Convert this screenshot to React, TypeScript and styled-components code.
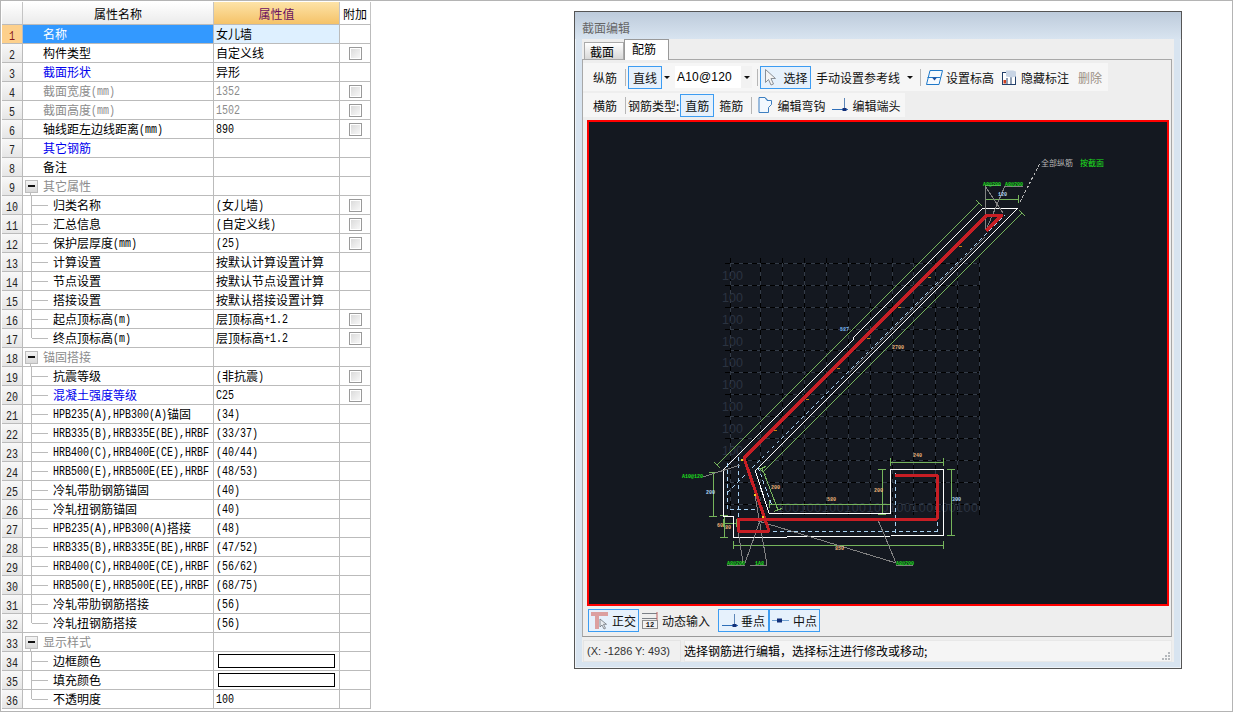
import styled, { createGlobalStyle } from "styled-components";

const GlobalStyle = createGlobalStyle`
  html, body { margin: 0; padding: 0; background: #fff; }
  body { font-family: "Noto Sans CJK SC", "Liberation Sans", sans-serif; font-size: 12px; color: #000; }
`;

type Row = {
  name: string;
  value?: string;
  kind?: "top" | "group" | "child";
  tone?: "link" | "muted";
  check?: boolean;
  last?: boolean;
  swatch?: boolean;
};

const rows: Row[] = [
  { name: "名称", value: "女儿墙" },
  { name: "构件类型", value: "自定义线", check: true },
  { name: "截面形状", value: "异形", tone: "link" },
  { name: "截面宽度(mm)", value: "1352", tone: "muted", check: true },
  { name: "截面高度(mm)", value: "1502", tone: "muted", check: true },
  { name: "轴线距左边线距离(mm)", value: "890", check: true },
  { name: "其它钢筋", tone: "link" },
  { name: "备注" },
  { name: "其它属性", kind: "group" },
  { name: "归类名称", value: "(女儿墙)", kind: "child", check: true },
  { name: "汇总信息", value: "(自定义线)", kind: "child", check: true },
  { name: "保护层厚度(mm)", value: "(25)", kind: "child", check: true },
  { name: "计算设置", value: "按默认计算设置计算", kind: "child" },
  { name: "节点设置", value: "按默认节点设置计算", kind: "child" },
  { name: "搭接设置", value: "按默认搭接设置计算", kind: "child" },
  { name: "起点顶标高(m)", value: "层顶标高+1.2", kind: "child", check: true },
  { name: "终点顶标高(m)", value: "层顶标高+1.2", kind: "child", check: true, last: true },
  { name: "锚固搭接", kind: "group" },
  { name: "抗震等级", value: "(非抗震)", kind: "child", check: true },
  { name: "混凝土强度等级", value: "C25", kind: "child", tone: "link", check: true },
  { name: "HPB235(A),HPB300(A)锚固", value: "(34)", kind: "child" },
  { name: "HRB335(B),HRB335E(BE),HRBF", value: "(33/37)", kind: "child" },
  { name: "HRB400(C),HRB400E(CE),HRBF", value: "(40/44)", kind: "child" },
  { name: "HRB500(E),HRB500E(EE),HRBF", value: "(48/53)", kind: "child" },
  { name: "冷轧带肋钢筋锚固", value: "(40)", kind: "child" },
  { name: "冷轧扭钢筋锚固", value: "(40)", kind: "child" },
  { name: "HPB235(A),HPB300(A)搭接", value: "(48)", kind: "child" },
  { name: "HRB335(B),HRB335E(BE),HRBF", value: "(47/52)", kind: "child" },
  { name: "HRB400(C),HRB400E(CE),HRBF", value: "(56/62)", kind: "child" },
  { name: "HRB500(E),HRB500E(EE),HRBF", value: "(68/75)", kind: "child" },
  { name: "冷轧带肋钢筋搭接", value: "(56)", kind: "child" },
  { name: "冷轧扭钢筋搭接", value: "(56)", kind: "child", last: true },
  { name: "显示样式", kind: "group" },
  { name: "边框颜色", kind: "child", swatch: true },
  { name: "填充颜色", kind: "child", swatch: true },
  { name: "不透明度", value: "100", kind: "child", last: true },
];

// latin runs use a 6px-wide mono, as the bitmap font in the program does
function Mixed({ text }: { text: string }) {
  const parts = text.split(/([\x20-\x7e]+)/).filter(Boolean);
  return (
    <>
      {parts.map((p, i) => (/^[\x20-\x7e]/.test(p) ? <Latin key={i}>{p}</Latin> : <span key={i}>{p}</span>))}
    </>
  );
}

function PropertyTable() {
  return (
    <Table>
      <HeadRow>
        <HeadCorner />
        <HeadName>属性名称</HeadName>
        <HeadValue>属性值</HeadValue>
        <HeadExtra>附加</HeadExtra>
      </HeadRow>
      {rows.map((r, i) => {
        const active = i === 0;
        const tone = r.kind === "group" ? "muted" : r.tone;
        return (
          <BodyRow key={i}>
            <NumCell $active={active}><RowNumber>{i + 1}</RowNumber></NumCell>
            <NameCell $active={active} $tone={tone} $top={!r.kind}>
              {r.kind === "group" && <Expander />}
              {r.kind === "child" && <TreeGuide $last={r.last} />}
              <Mixed text={r.name} />
            </NameCell>
            <ValueCell $active={active} $tone={r.tone === "muted" ? "muted" : undefined}>
              {r.value && <Mixed text={r.value} />}
              {r.swatch && <Swatch />}
            </ValueCell>
            <ExtraCell>{r.check && <CheckBox />}</ExtraCell>
          </BodyRow>
        );
      })}
    </Table>
  );
}

const PerpIcon = () => (
  <svg width="17" height="14" viewBox="0 0 17 14">
    <path d="M0 11.5h16" stroke="#2f6fb8" strokeWidth="1" />
    <path d="M12.5 0v11" stroke="#5c86b8" strokeWidth="1" />
    <rect x="10.5" y="10" width="4" height="3" fill="#12307a" />
  </svg>
);

const MidIcon = () => (
  <svg width="17" height="10" viewBox="0 0 17 10">
    <path d="M0 4.5h17" stroke="#6f9fd0" strokeWidth="1" />
    <rect x="5" y="2.5" width="5" height="4" fill="#12307a" />
  </svg>
);

const CursorIcon = () => (
  <svg width="14" height="17" viewBox="0 0 14 17">
    <path d="M1.5 .5v13l3-3 2.5 5.5 2.5-1-2.5-5.5h4.5z" fill="#f4f4f4" stroke="#8a8f96" />
  </svg>
);

const LevelIcon = () => (
  <svg width="17" height="15" viewBox="0 0 17 15">
    <path d="M4 .5h12.5l-3.500 14H.5z" fill="#f6fafe" stroke="#1f78c8" />
    <path d="M1.500 7.500h13" stroke="#1f78c8" />
    <path d="M6 7.500h5l-2.500 3z" fill="#1f4fa0" />
  </svg>
);

const HideIcon = () => (
  <svg width="15" height="16" viewBox="0 0 15 16">
    <rect x=".5" y="3.5" width="13" height="12" fill="#fff" stroke="#23406a" />
    <path d="M5 15V9M9 15V6" stroke="#23406a" />
    <rect x="1.5" y="11" width="2.5" height="3.500" fill="#d04020" />
    <path d="M4 1.500h7l3 1v5l-4 1-6-1z" fill="#c8d4e4" />
  </svg>
);

const HookIcon = () => (
  <svg width="15" height="16" viewBox="0 0 15 16">
    <path d="M1 .5h6l2 3h4.500v4l-3 3v5H1z" fill="#f2f8fe" stroke="#3e7fc0" />
    <path d="M7 .5l3 3" stroke="#3e7fc0" fill="none" />
  </svg>
);

const OrthoIcon = () => (
  <svg width="18" height="20" viewBox="0 0 18 20">
    <path d="M0 1h17v4H8v13H4V5H0z" fill="#dca0a0" />
    <path d="M9 8v8l2-2 2 4 1.500-.7-2-4h3z" fill="#e8ecf0" stroke="#70767e" strokeWidth=".8" />
  </svg>
);

const InputIcon = () => (
  <svg width="16" height="17" viewBox="0 0 16 17">
    <path d="M0 1.500h15M0 6.500h15" stroke="#7a7f86" />
    <path d="M15 0v8" stroke="#c06060" />
    <rect x=".5" y="8.500" width="15" height="8" fill="#f2f2f2" stroke="#8d8d8d" />
    <text x="8" y="15" fontSize="7" fontFamily="Liberation Mono, monospace" fontWeight="700" textAnchor="middle" fill="#111">12</text>
  </svg>
);

const RED = "#c81e24";
const GREEN = "#76b45c";
const GRID_X = [730, 760, 782, 804, 826, 848, 870, 892, 913, 935, 957, 979];
const GRID_Y = [263, 285, 307, 329, 350, 372, 394, 416, 438, 460, 482, 504];

const dims: number[][] = [
  [717, 465, 979, 203], [763, 472, 1022, 213], [713, 472, 713, 516], [724, 515, 724, 537],
  [723, 523, 736, 523], [882, 469, 882, 514], [890, 462, 943, 462], [951, 469, 951, 535],
  [733, 545, 943, 545], [769, 504, 890, 504], [762, 468, 778, 510], [985, 199, 1018, 199],
];

const leaders: number[][] = [
  [703, 477, 740, 465], [743, 563, 738, 530], [745, 563, 761, 518], [767, 565, 755, 495],
  [896, 563, 755, 520], [896, 563, 878, 520], [985, 186, 986, 230], [985, 186, 1003, 213],
  [1005, 186, 986, 230], [985, 185, 1001, 185], [1005, 186, 1023, 186], [727, 565, 745, 565],
  [750, 565, 767, 565], [896, 565, 913, 565], [850, 372, 985, 237],
];

const tags: [number, number, string, string][] = [
  [840, 329, "#7fbcf6", "587"], [892, 347, "#eab47a", "2700"], [913, 455, "#eab47a", "240"],
  [771, 487, "#eab47a", "200"], [827, 499, "#eab47a", "580"], [874, 490, "#eab47a", "200"],
  [706, 492, "#b4d8f6", "200"], [952, 499, "#b4d8f6", "300"], [717, 525, "#eab47a", "60"],
  [725, 527, "#eab47a", "80"], [835, 548, "#eab47a", "850"], [998, 194, "#b4d8f6", "120"],
];

function Drawing() {
  return (
    <CanvasSvg viewBox="587 120 582 486" shapeRendering="crispEdges">
      {GRID_Y.map((y) => (
        <g key={y}>
          <line x1={725} y1={y} x2={980} y2={y} stroke="#343c48" />
          <line x1={725} y1={y} x2={980} y2={y} stroke="#000" strokeDasharray="5 4" />
        </g>
      ))}
      {GRID_X.map((x) => (
        <g key={x}>
          <line x1={x} y1={258} x2={x} y2={515} stroke="#343c48" />
          <line x1={x} y1={258} x2={x} y2={515} stroke="#000" strokeDasharray="5 4" />
        </g>
      ))}
      {GRID_Y.slice(0, 9).map((y) => (
        <GhostText key={y} x={722} y={y + 17}>100</GhostText>
      ))}
      <GhostText x={777} y={512} textLength={201}>100100100100100100100100100</GhostText>

      {dims.map(([a, b, c, d], i) => {
        const len = Math.hypot(c - a, d - b);
        const nx = ((d - b) / len) * 4;
        const ny = (-(c - a) / len) * 4;
        return (
          <g key={i} stroke={GREEN} fill="none">
            <line x1={a} y1={b} x2={c} y2={d} />
            <line x1={a - nx} y1={b - ny} x2={a + nx} y2={b + ny} />
            <line x1={c - nx} y1={d - ny} x2={c + nx} y2={d + ny} />
          </g>
        );
      })}

      <path
        d="M983 208H1018L756 470H755L769 513H890V469H943V535.500L787 537H733V516H723V470L853 340V338Z"
        fill="none"
        stroke="#fff"
      />
      <g fill="none" stroke="#a8d2f4" strokeDasharray="4 3">
        <path d="M727 493L1005 215" />
        <path d="M738 457V537" />
        <path d="M727 463V509H755" />
        <path d="M738 532L937 531" />
        <path d="M895 473V533" />
        <path d="M937 522V532" />
        <path d="M758 467L772 506" />
      </g>
      <path d="M1020 202L1040 163" stroke="#b8b8b8" strokeDasharray="3 2" fill="none" />

      {leaders.map(([a, b, c, d], i) => (
        <line key={i} x1={a} y1={b} x2={c} y2={d} stroke="#828282" />
      ))}

      <path
        d="M895 475H937V519H738V531H769L744 458L987 215H1002L986 231"
        fill="none"
        stroke={RED}
        strokeWidth="3"
        strokeLinejoin="round"
      />
      {[[774, 430], [806, 399], [837, 368], [867, 338], [898, 307], [928, 277], [959, 246]].map(([x, y]) => (
        <rect key={x} x={x} y={y} width="3" height="1" fill="#c88414" />
      ))}
      {[[741, 459], [754, 494], [762, 516]].map(([x, y]) => (
        <rect key={x} x={x} y={y} width="2" height="2" fill="#f0d020" />
      ))}

      {tags.map(([x, y, c, t]) => (
        <TagText key={`${x}-${y}`} x={x} y={y + 2} fill={c}>{t}</TagText>
      ))}
      <NoteText x={682} y={478} fill="#1ee01e">A10@120</NoteText>
      <NoteText x={727} y={565} fill="#1ee01e">A8@200</NoteText>
      <NoteText x={755} y={565} fill="#1ee01e">1A8</NoteText>
      <NoteText x={896} y={565} fill="#1ee01e">A8@200</NoteText>
      <NoteText x={983} y={186} fill="#1ee01e">A8@200</NoteText>
      <NoteText x={1005} y={186} fill="#1ee01e">A8@200</NoteText>
      <LabelText x={1041} y={166} fill="#b4b4b4">全部纵筋</LabelText>
      <LabelText x={1080} y={166} fill="#1ee01e">按截面</LabelText>
    </CanvasSvg>
  );
}

export default function App() {
  return (
    <>
      <GlobalStyle />
      <Page>
        <PropertyTable />
        <Dialog>
          <TitleBar>截面编辑</TitleBar>
          <DialogBody>
            <TabStrip>
              <Tab>截面</Tab>
              <Tab $active>配筋</Tab>
            </TabStrip>
            <Panel>
              <Toolbar $h={28} $w={525}>
                <ToolLabel>纵筋</ToolLabel>
                <Sep $ml={8} />
                <ToggleButton $w={34}>直线</ToggleButton>
                <Caret $w={10} />
                <Combo>
                  <ComboText>A10@120</ComboText>
                  <ComboArrow><Caret $w={11} /></ComboArrow>
                </Combo>
                <Sep $ml={5} />
                <ToggleButton $w={51} $gap={6}><CursorIcon />选择</ToggleButton>
                <ToolLabel $ml={5}>手动设置参考线</ToolLabel>
                <Caret $w={20} />
                <Sep $ml={0} />
                <IconLabel $ml={3} $gap={3}><LevelIcon />设置标高</IconLabel>
                <IconLabel $ml={8} $gap={4}><HideIcon />隐藏标注</IconLabel>
                <ToolLabel $ml={9} $off>删除</ToolLabel>
              </Toolbar>
              <Toolbar $h={24} $w={322} $mt={2}>
                <ToolLabel>横筋</ToolLabel>
                <Sep $ml={8} />
                <ToolLabel>钢筋类型:</ToolLabel>
                <ToggleButton $w={34} $ml={1}>直筋</ToggleButton>
                <ToolLabel $ml={5}>箍筋</ToolLabel>
                <Sep $ml={8} />
                <IconLabel $ml={4} $gap={4}><HookIcon />编辑弯钩</IconLabel>
                <IconLabel $ml={7} $gap={3}><PerpIcon />编辑端头</IconLabel>
              </Toolbar>
              <Canvas><Drawing /></Canvas>
              <BottomBar>
                <ToggleButton $w={51} $gap={3}><OrthoIcon />正交</ToggleButton>
                <IconLabel $ml={3} $gap={4}><InputIcon />动态输入</IconLabel>
                <ToggleButton $w={51} $ml={8} $gap={2}><PerpIcon />垂点</ToggleButton>
                <ToggleButton $w={51} $gap={4} $ml={0}><MidIcon />中点</ToggleButton>
              </BottomBar>
            </Panel>
            <StatusBar>
              <CoordCell>(X: -1286 Y: 493)</CoordCell>
              <MessageCell>
                选择钢筋进行编辑，选择标注进行修改或移动;
                <Gripper viewBox="0 0 10 9" width="10" height="9">
                  {[[7, 0], [4, 3], [7, 3], [1, 6], [4, 6], [7, 6]].map(([x, y]) => (
                    <rect key={`${x}${y}`} x={x} y={y} width="2" height="2" fill="#b4b8bc" />
                  ))}
                </Gripper>
              </MessageCell>
            </StatusBar>
          </DialogBody>
        </Dialog>
      </Page>
    </>
  );
}

const Page = styled.div`
  box-sizing: border-box;
  width: 1233px;
  height: 712px;
  border: 1px solid #b4b4b4;
  padding: 1px;
  display: flex;
  align-items: flex-start;
  overflow: hidden;
`;

const Latin = styled.span`
  display: inline-block;
  font-family: "Liberation Mono", monospace;
  font-size: 10px;
  line-height: 12px;
  white-space: pre;
  transform: translateY(2px) scaleY(1.2);
`;

const RowNumber = styled(Latin)`
  transform: translateY(1px) scaleY(1.2);
`;

const Table = styled.div`
  width: 369px;
  flex: none;
`;

const HeadRow = styled.div`
  display: flex;
  height: 22px;
  border-bottom: 1px solid #bbb;
`;

const headCell = `
  box-sizing: border-box;
  display: flex;
  align-items: center;
  justify-content: center;
  border-right: 1px solid #c4c4c4;
  background: linear-gradient(#fff, #ebebeb);
`;

const HeadCorner = styled.div`
  ${headCell}
  width: 21px;
`;

const HeadName = styled.div`
  ${headCell}
  width: 191px;
`;

const HeadValue = styled.div`
  ${headCell}
  width: 126px;
  color: #6a1060;
  background: linear-gradient(#fde3a8, #f5c268);
`;

const HeadExtra = styled.div`
  ${headCell}
  width: 31px;
  background: #fff;
`;

const BodyRow = styled.div`
  display: flex;
  height: 19px;
  box-sizing: border-box;
  border-bottom: 1px solid #bbb;
  line-height: 18px;
`;

const NumCell = styled.div<{ $active?: boolean }>`
  box-sizing: border-box;
  width: 21px;
  border-right: 1px solid #bbb;
  text-align: center;
  color: ${(p) => (p.$active ? "#8a1a1a" : "#222")};
  background: ${(p) => (p.$active ? "#fdd08c" : "linear-gradient(#f8f8f8, #e6e6e6)")};
`;

const toneColor = (tone?: string) =>
  tone === "link" ? "#0000ee" : tone === "muted" ? "#8c8c8c" : "#000";

const NameCell = styled.div<{ $active?: boolean; $tone?: string; $top?: boolean }>`
  box-sizing: border-box;
  width: 191px;
  display: flex;
  align-items: center;
  white-space: pre;
  overflow: hidden;
  padding-left: ${(p) => (p.$top ? "20px" : "0")};
  border-right: 1px solid #bbb;
  color: ${(p) => (p.$active ? "#fff" : toneColor(p.$tone))};
  background: ${(p) => (p.$active ? "#3399ff" : "#fff")};
`;

const Expander = styled.span`
  position: relative;
  box-sizing: border-box;
  flex: none;
  width: 13px;
  height: 13px;
  margin: 0 5px 0 2px;
  border: 1px solid #bdbdbd;
  background: linear-gradient(#f4f4f4, #d8d8d8);
  &::before {
    content: "";
    position: absolute;
    left: 2px;
    top: 4px;
    width: 7px;
    height: 2px;
    background: #111;
  }
  &::after {
    content: "";
    position: absolute;
    left: 4px;
    top: 12px;
    width: 1px;
    height: 4px;
    background: #bbb;
  }
`;

const TreeGuide = styled.span<{ $last?: boolean }>`
  position: relative;
  flex: none;
  align-self: stretch;
  width: 22px;
  margin-left: 8px;
  margin-bottom: -1px;
  &::before {
    content: "";
    position: absolute;
    left: 0;
    top: 0;
    width: 1px;
    height: ${(p) => (p.$last ? "9px" : "19px")};
    background: #bbb;
  }
  &::after {
    content: "";
    position: absolute;
    left: 1px;
    top: 9px;
    width: 16px;
    height: 1px;
    background: #bbb;
  }
`;

const ValueCell = styled.div<{ $active?: boolean; $tone?: string }>`
  box-sizing: border-box;
  width: 126px;
  display: flex;
  align-items: center;
  white-space: pre;
  padding-left: 2px;
  border-right: 1px solid #bbb;
  color: ${(p) => toneColor(p.$tone)};
  background: ${(p) => (p.$active ? "#def0ff" : "#fff")};
`;

const ExtraCell = styled.div`
  box-sizing: border-box;
  width: 31px;
  display: flex;
  align-items: center;
  justify-content: center;
  border-right: 1px solid #bbb;
`;

const CheckBox = styled.span`
  box-sizing: border-box;
  width: 13px;
  height: 13px;
  margin-left: 1px;
  border: 1px solid #9a9a9a;
  background: linear-gradient(135deg, #d8d8d8, #fafafa);
  box-shadow: inset 0 0 0 1px #fff;
`;

const Swatch = styled.span`
  box-sizing: border-box;
  display: block;
  width: 117px;
  height: 14px;
  margin-left: 2px;
  border: 1px solid #000;
  background: #fff;
`;

const Dialog = styled.div`
  box-sizing: border-box;
  flex: none;
  width: 608px;
  height: 658px;
  margin: 9px 0 0 203px;
  border: 1px solid #555;
  background: #d8e4f0;
  box-shadow: inset 0 0 0 1px #eef3f8;
`;

const TitleBar = styled.div`
  height: 27px;
  padding: 7px 0 0 7px;
  box-sizing: border-box;
  line-height: 18px;
  color: #666;
  background: linear-gradient(#bdcbdb, #d8e4f0);
`;

const DialogBody = styled.div`
  width: 592px;
  margin-left: 7px;
  height: 623px;
  background: #eeeeee;
`;

const TabStrip = styled.div`
  display: flex;
  align-items: flex-end;
  height: 20px;
  padding-left: 2px;
`;

const Tab = styled.div<{ $active?: boolean }>`
  box-sizing: border-box;
  display: flex;
  align-items: center;
  border: 1px solid ${(p) => (p.$active ? "#999" : "#aaa")};
  border-bottom: 0;
  width: ${(p) => (p.$active ? "45px" : "40px")};
  height: ${(p) => (p.$active ? "21px" : "17px")};
  margin-bottom: ${(p) => (p.$active ? "-1px" : "0")};
  position: relative;
  z-index: ${(p) => (p.$active ? 1 : 0)};
  padding: ${(p) => (p.$active ? "0 0 3px 7px" : "0 0 0 5px")};
  background: ${(p) => (p.$active ? "#fff" : "linear-gradient(#fff, #d8d8d8)")};
`;

const Panel = styled.div`
  box-sizing: border-box;
  width: 590px;
  height: 578px;
  padding-top: 3px;
  border: 1px solid #a8a8a8;
  border-bottom-color: #999;
`;

const Toolbar = styled.div<{ $h: number; $w: number; $mt?: number }>`
  display: flex;
  align-items: center;
  box-sizing: border-box;
  height: ${(p) => p.$h}px;
  width: ${(p) => p.$w}px;
  margin-top: ${(p) => p.$mt ?? 0}px;
  padding-left: 10px;
  background: #f6f6f6;
`;

const ToolLabel = styled.span<{ $ml?: number; $off?: boolean }>`
  flex: none;
  white-space: pre;
  margin-left: ${(p) => p.$ml ?? 0}px;
  color: ${(p) => (p.$off ? "#9a8f84" : "#111")};
`;

const IconLabel = styled.span<{ $ml?: number; $gap?: number }>`
  display: inline-flex;
  align-items: center;
  flex: none;
  margin-left: ${(p) => p.$ml ?? 0}px;
  gap: ${(p) => p.$gap ?? 4}px;
  color: #111;
`;

const Sep = styled.span<{ $ml: number }>`
  flex: none;
  width: 1px;
  height: 17px;
  margin: 0 2px 0 ${(p) => p.$ml}px;
  background: #b6b6b6;
`;

const ToggleButton = styled.span<{ $w: number; $ml?: number; $gap?: number }>`
  box-sizing: border-box;
  flex: none;
  display: inline-flex;
  align-items: center;
  justify-content: center;
  height: 23px;
  width: ${(p) => p.$w}px;
  margin-left: ${(p) => p.$ml ?? 0}px;
  gap: ${(p) => p.$gap ?? 0}px;
  border: 1px solid #3c9cf2;
  background: #e6f1fc;
  color: #111;
`;

const Caret = styled.span<{ $w: number }>`
  flex: none;
  display: flex;
  align-items: center;
  justify-content: center;
  width: ${(p) => p.$w}px;
  &::after {
    content: "";
    border-left: 3px solid transparent;
    border-right: 3px solid transparent;
    border-top: 3px solid #111;
  }
`;

const Combo = styled.div`
  flex: none;
  display: flex;
  align-items: center;
  width: 77px;
  height: 22px;
  margin-left: 3px;
  background: #fff;
`;

const ComboText = styled.span`
  flex: 1;
  padding-left: 2px;
  font-family: "Liberation Sans", sans-serif;
  font-size: 12px;
  letter-spacing: 0.2px;
`;

const ComboArrow = styled.span`
  display: flex;
  align-items: center;
  height: 100%;
  background: #f2f2f2;
`;

const Canvas = styled.div`
  box-sizing: border-box;
  width: 582px;
  height: 486px;
  margin: 3px 0 0 4px;
  border: 2px solid #ff0000;
  background: #141820;
  overflow: hidden;
`;

const CanvasSvg = styled.svg`
  display: block;
  width: 582px;
  height: 486px;
  margin: -2px;
`;

const GhostText = styled.text`
  font-family: "Liberation Sans", sans-serif;
  font-size: 12.5px;
  fill: #2b3340;
`;

const TagText = styled.text`
  font-family: "Liberation Mono", monospace;
  font-size: 5px;
  font-weight: 700;
`;

const NoteText = styled.text`
  font-family: "Liberation Mono", monospace;
  font-size: 5px;
  font-weight: 700;
`;

const LabelText = styled.text`
  font-family: "Noto Sans CJK SC", sans-serif;
  font-size: 8px;
`;

const BottomBar = styled.div`
  display: flex;
  align-items: center;
  height: 23px;
  margin: 3px 0 0 5px;
`;

const StatusBar = styled.div`
  display: flex;
  height: 22px;
  margin-top: 3px;
  width: 590px;
`;

const CoordCell = styled.div`
  box-sizing: border-box;
  width: 98px;
  margin-left: 1px;
  padding-left: 4px;
  line-height: 22px;
  font-family: "Liberation Sans", sans-serif;
  font-size: 11px;
  color: #333;
  background: #f0f0f0;
  box-shadow: inset 0 0 0 1px #e4e4e4;
`;

const MessageCell = styled.div`
  position: relative;
  box-sizing: border-box;
  flex: 1;
  margin-left: 3px;
  line-height: 22px;
  white-space: pre;
  background: #f5f5f5;
  box-shadow: inset 0 0 0 1px #e8e8e8;
`;

const Gripper = styled.svg`
  position: absolute;
  right: 1px;
  bottom: 1px;
`;
